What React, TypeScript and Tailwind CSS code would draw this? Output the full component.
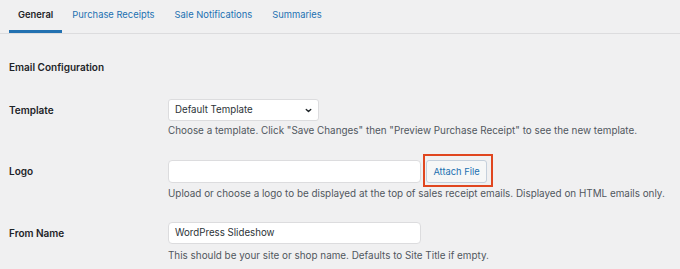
const tabs = ['General', 'Purchase Receipts', 'Sale Notifications', 'Summaries'];

function Row({ label, children }: { label: string; children: React.ReactNode }) {
  return (
    <div className="flex">
      <div className="w-[159px] shrink-0 flex items-start">
        <span className="text-[10px] font-semibold text-[#1d2327] leading-[22px]">{label}</span>
      </div>
      <div className="flex flex-col">{children}</div>
    </div>
  );
}

export default function App() {
  return (
    <div className="w-[680px] h-[269px] overflow-hidden bg-[#f0f0f1] font-['Inter',sans-serif]">
      {/* Tabs */}
      <nav className="flex h-[34px] border-b border-[#dcdcde] pl-[9px] text-[9.4px]">
        {tabs.map((tab, i) => (
          <a
            key={tab}
            className={
              i === 0
                ? 'h-[33px] px-[9px] flex items-center border-b-[3px] border-[#2271b1] text-[#1d2327] font-semibold'
                : 'h-[33px] px-[10px] flex items-center border-b-[3px] border-transparent text-[#2271b1]'
            }
          >
            {tab}
          </a>
        ))}
      </nav>

      <div className="pl-[9px]">
        <h2 className="mt-[23px] text-[10px] font-semibold leading-[20px] text-[#1d2327]">Email Configuration</h2>

        {/* Template */}
        <div className="mt-[22px]">
          <Row label="Template">
            <div className="w-[151px] h-[22px] bg-white border border-[#dcdcde] rounded-[3px] flex items-center justify-between pl-[6px] pr-[5px] text-[9.7px] text-[#2c3338]">
              <span>Default Template</span>
              <svg width="9" height="9" viewBox="0 0 10 10" fill="none" stroke="#1d2327" strokeWidth="1.5" strokeLinecap="round" strokeLinejoin="round">
                <path d="M2.5 3.8 5 6.2 7.5 3.8" />
              </svg>
            </div>
            <p className="leading-[18px] text-[9.9px] text-[#50575e] whitespace-nowrap">
              Choose a template. Click "Save Changes" then "Preview Purchase Receipt" to see the new template.
            </p>
          </Row>
        </div>

        {/* Logo */}
        <div className="mt-[21px]">
          <Row label="Logo">
            <div className="flex items-center gap-[5px] h-[23px]">
              <div className="w-[253px] h-[23px] bg-white border border-[#dcdcde] rounded-[4px]" />
              <div className="relative flex">
                <button className="h-[23px] w-[61px] bg-[#f6f7f7] border border-[#c5d0dc] rounded-[3px] text-[9.3px] text-[#2271b1] leading-[21px]">
                  Attach File
                </button>
                <span className="absolute -left-[3px] -top-[6px] -right-[6px] -bottom-[4px] border-2 border-[#e0461f] pointer-events-none" />
              </div>
            </div>
            <p className="mt-[1px] leading-[18px] text-[9.9px] text-[#50575e] whitespace-nowrap">
              Upload or choose a logo to be displayed at the top of sales receipt emails. Displayed on HTML emails only.
            </p>
          </Row>
        </div>

        {/* From Name */}
        <div className="mt-[20px]">
          <Row label="From Name">
            <div className="w-[253px] h-[22px] bg-white border border-[#dcdcde] rounded-[4px] flex items-center pl-[6px] text-[9.7px] text-[#2c3338]">
              WordPress Slideshow
            </div>
            <p className="mt-[2px] leading-[18px] text-[9.9px] text-[#50575e] whitespace-nowrap">
              This should be your site or shop name. Defaults to Site Title if empty.
            </p>
          </Row>
        </div>
      </div>
    </div>
  );
}
